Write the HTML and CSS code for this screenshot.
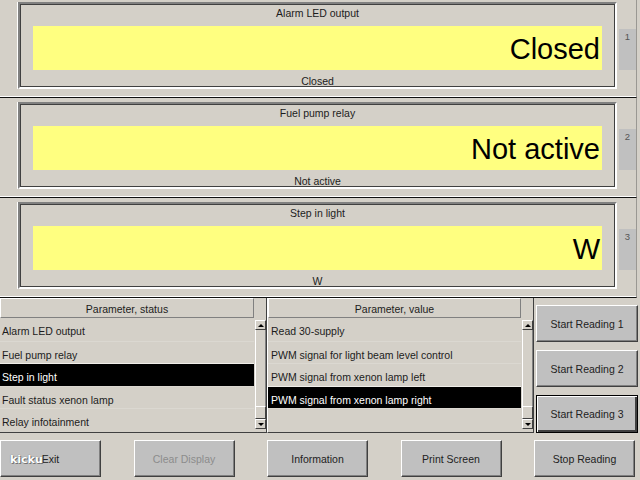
FILE: index.html
```html
<!DOCTYPE html>
<html lang="en">

<head>
    <meta charset="UTF-8">
    <meta name="viewport" content="width=device-width, initial-scale=1.0">
    <title>Measured Values</title>
    <link rel="stylesheet" href="styles.css">
</head>

<body>
    <div class="screen">
        <div class="panel">
            <div class="frame">
                <div class="frame-title">Alarm LED output</div>
                <div class="frame-value">Closed</div>
                <div class="frame-caption">Closed</div>
            </div>
            <div class="tab">1</div>
        </div>

        <div class="panel">
            <div class="frame">
                <div class="frame-title">Fuel pump relay</div>
                <div class="frame-value">Not active</div>
                <div class="frame-caption">Not active</div>
            </div>
            <div class="tab">2</div>
        </div>

        <div class="panel">
            <div class="frame">
                <div class="frame-title">Step in light</div>
                <div class="frame-value">W</div>
                <div class="frame-caption">W</div>
            </div>
            <div class="tab">3</div>
        </div>

        <div class="lower">
            <div class="list list-status">
                <div class="list-main">
                    <div class="list-head">Parameter, status</div>
                    <div class="row">Alarm LED output</div>
                    <div class="row">Fuel pump relay</div>
                    <div class="row selected">Step in light</div>
                    <div class="row">Fault status xenon lamp</div>
                    <div class="row">Relay infotainment</div>
                </div>
                <div class="scrollbar">
                    <div class="arrow arrow-up"></div>
                    <div class="track"></div>
                    <div class="thumb"></div>
                    <div class="arrow arrow-down"></div>
                </div>
            </div>

            <div class="list list-value">
                <div class="list-main">
                    <div class="list-head">Parameter, value</div>
                    <div class="row">Read 30-supply</div>
                    <div class="row">PWM signal for light beam level control</div>
                    <div class="row">PWM signal from xenon lamp left</div>
                    <div class="row selected">PWM signal from xenon lamp right</div>
                    <div class="row"></div>
                </div>
                <div class="scrollbar">
                    <div class="arrow arrow-up"></div>
                    <div class="track"></div>
                    <div class="thumb"></div>
                    <div class="arrow arrow-down"></div>
                </div>
            </div>

            <div class="side">
                <button class="btn">Start Reading 1</button>
                <button class="btn">Start Reading 2</button>
                <button class="btn btn-default">Start Reading 3</button>
            </div>
        </div>

        <div class="toolbar">
            <button class="btn">Exit</button>
            <button class="btn btn-disabled">Clear Display</button>
            <button class="btn">Information</button>
            <button class="btn">Print Screen</button>
            <button class="btn">Stop Reading</button>
        </div>

        <span class="watermark">kicku</span>
    </div>
</body>

</html>
```

FILE: styles.css
```css
body {
    margin: 0;
    padding: 0;
    background-color: #d4d0c8;
    font-family: "Liberation Sans", Arial, sans-serif;
    font-size: 10.5px;
    color: #1c1c1c;
}

.screen {
    position: relative;
    width: 640px;
    height: 480px;
    overflow: hidden;
}

/* measured value panels */

.panel {
    display: flex;
    align-items: flex-start;
    width: 637px;
    height: 100px;
    box-sizing: border-box;
    padding: 4px 0 0 18px;
    border-bottom: 1px solid #111;
    border-right: 1px solid #9a9893;
    box-shadow: inset 0 -1px #fff;
}

.panel:first-child {
    margin-top: -2px;
}

.frame {
    width: 599px;
    box-sizing: border-box;
    border: 2px solid;
    border-color: #808080 #fff #fff #808080;
    box-shadow: inset 1px 1px #404040, inset -1px -1px #404040, -1px 0 #fff;
}

.frame-title {
    height: 22px;
    line-height: 18px;
    text-align: center;
}

.frame-value {
    height: 44px;
    margin: 0 13px;
    padding: 1px 2px 0 0;
    box-sizing: border-box;
    background-color: #ffff80;
    font-size: 29px;
    line-height: 44px;
    text-align: right;
    color: #000;
}

.frame-caption {
    height: 17px;
    padding-top: 3px;
    line-height: 16px;
    text-align: center;
    box-sizing: border-box;
}

.tab {
    width: 17px;
    height: 41px;
    margin: 27px 0 0 2px;
    padding-top: 3px;
    box-sizing: border-box;
    background-color: #c0c0c0;
    font-size: 9.5px;
    line-height: 10px;
    text-align: center;
    color: #555;
}

/* lists */

.lower {
    display: flex;
    height: 135px;
}

.list {
    display: flex;
    width: 267px;
    box-sizing: border-box;
    border-bottom: 1px solid #404040;
    border-right: 1px solid #404040;
}

.list-value {
    border-left: 1px solid #fff;
}

.list-main {
    flex: 1;
    min-width: 0;
}

.list-head {
    height: 20px;
    box-sizing: border-box;
    padding-top: 1px;
    border: 1px solid;
    border-color: #fff #808080 #808080 #fff;
    line-height: 18px;
    text-align: center;
}

.row {
    height: 22.6px;
    line-height: 22px;
    padding: 2px 0 0 2px;
    box-sizing: border-box;
    border-top: 1px solid #dbd8d1;
    white-space: nowrap;
    overflow: hidden;
}

.list-head + .row {
    border-top: none;
}

.list-value .row {
    padding-left: 3px;
}

.row.selected {
    border-top-color: #f0eee9;
    background-color: #000;
    color: #fff;
}

.scrollbar {
    display: flex;
    flex-direction: column;
    width: 12px;
    padding: 22px 0 3px 1px;
    box-sizing: border-box;
}

.track {
    flex: 1;
    border-left: 1px solid #fff;
    border-right: 1px solid #808080;
    background-color: #d4d0c8;
}

.arrow,
.thumb {
    position: relative;
    box-sizing: border-box;
    border: 1px solid;
    border-color: #fff #404040 #404040 #fff;
    background-color: #d4d0c8;
}

.arrow {
    height: 10px;
}

.thumb {
    height: 13px;
}

.arrow::after {
    content: "";
    position: absolute;
    left: 2px;
    top: 3px;
    border-left: 3px solid transparent;
    border-right: 3px solid transparent;
}

.arrow-up::after {
    border-bottom: 3px solid #000;
}

.arrow-down::after {
    border-top: 3px solid #000;
}

/* buttons */

.btn {
    height: 37px;
    box-sizing: border-box;
    padding: 0;
    border: 1px solid;
    border-color: #fff #404040 #404040 #fff;
    box-shadow: inset -1px -1px #808080;
    background-color: #c0c0c0;
    font-family: "Liberation Sans", Arial, sans-serif;
    font-size: 10.5px;
    color: #222;
}

.btn-default {
    height: 38px;
    border: 1px solid #000;
    box-shadow: inset 1px 1px #fff, inset -2px -2px #404040;
}

.btn-disabled {
    color: #8c8c8c;
}

.side {
    display: flex;
    flex-direction: column;
    gap: 8px;
    padding: 7px 0 0 2px;
}

.side .btn {
    width: 102px;
}

.toolbar {
    display: flex;
    gap: 32.5px;
    padding-top: 7px;
}

.toolbar .btn {
    width: 101px;
}

.watermark {
    position: absolute;
    left: 10px;
    top: 453px;
    font-family: "DejaVu Sans", sans-serif;
    font-size: 11px;
    font-weight: bold;
    color: #fff;
    text-shadow: 0 0 1px #555, 1px 1px 0 #777;
}
```
